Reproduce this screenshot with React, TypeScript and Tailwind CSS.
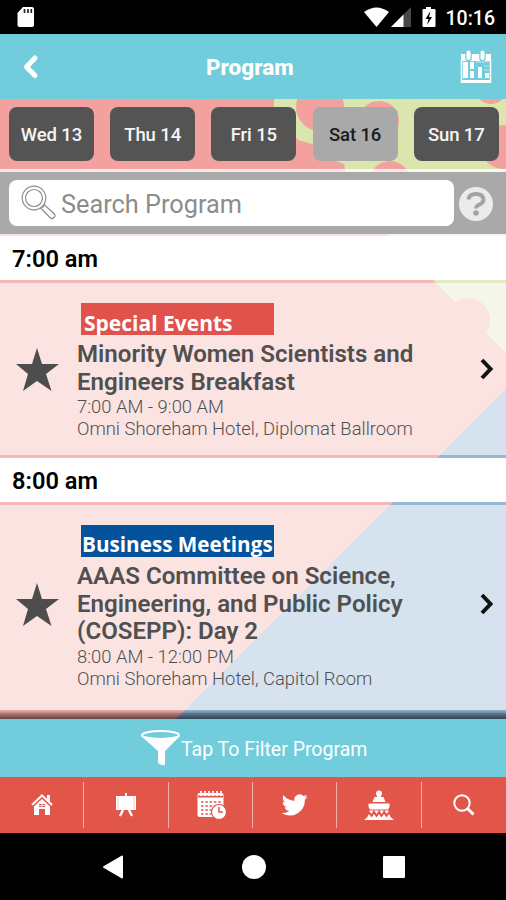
import React from 'react';

interface Session {
  time: string;
  category: string;
  categoryClass: string;
  title: string[];
  hours: string;
  place: string;
  rowClass: string;
}

const days = ['Wed 13', 'Thu 14', 'Fri 15', 'Sat 16', 'Sun 17'];

const sessions: Session[] = [
  {
    time: '7:00 am',
    category: 'Special Events',
    categoryClass: 'bg-[#e0524c] pl-[3px] text-[21px]',
    title: ['Minority Women Scientists and', 'Engineers Breakfast'],
    hours: '7:00 AM - 9:00 AM',
    place: 'Omni Shoreham Hotel, Diplomat Ballroom',
    rowClass: 'h-[172px]',
  },
  {
    time: '8:00 am',
    category: 'Business Meetings',
    categoryClass: 'bg-[#04529c] pl-px text-[20.700px] pb-px',
    title: ['AAAS Committee on Science,', 'Engineering, and Public Policy', '(COSEPP): Day 2'],
    hours: '8:00 AM - 12:00 PM',
    place: 'Omni Shoreham Hotel, Capitol Room',
    rowClass: 'h-[205px] [&>svg]:mb-[7px]',
  },
];

const StatusBar: React.FC = () => (
  <div className="flex h-[34px] items-center bg-black pl-[17px] pr-[11px] text-white">
    <svg width="18" height="22" viewBox="0 0 18 22">
      <path d="M6 1h9q2 0 2 2v16q0 2-2 2H2.500q-2 0-2-2V7z" fill="#fff" />
      <path d="M7.500 3v4M11 3v4M14.300 3v4" stroke="#222" strokeWidth="1.700" />
    </svg>
    <svg className="ml-auto" width="76" height="24" viewBox="0 0 76 24">
      <path d="M1 7Q13.500-2 26 7L13.500 22z" fill="#fff" />
      <path d="M48 2v20H28z" fill="#484848" />
      <path d="M40.500 9.500V22H28z" fill="#fff" />
      <path d="M63 2h5v2h3.500q1 0 1 1v16q0 1-1 1h-11q-1 0-1-1V5q0-1 1-1H63z" fill="#fff" />
      <path d="M67.500 6l-5 8h3l-1.500 6 5-8h-3z" fill="#000" />
    </svg>
    <span className="ml-[7px] mt-[3px] text-[19.500px] font-medium leading-none">10:16</span>
  </div>
);

const Header: React.FC = () => (
  <header className="flex h-[65px] items-center bg-[#71cddc] pl-[23px] pr-[14px] text-white">
    <svg width="32" height="26" viewBox="0 0 32 26">
      <path d="M12 4L3.500 13L12 21.500" fill="none" stroke="#fff" strokeWidth="5" strokeLinecap="round" strokeLinejoin="round" />
    </svg>
    <h1 className="ml-[151px] mt-[2px] text-[22.500px] font-extrabold leading-none">Program</h1>
    <svg className="ml-auto" width="32" height="34" viewBox="0 0 32 34">
      <path d="M1 4h30v7H1z" fill="#fff" />
      <path d="M1.500 10v22h29V10" fill="none" stroke="#fff" strokeWidth="1.500" />
      <path d="M1 30h30v3H1z" fill="#fff" />
      <path d="M8.500 8V3M22.500 8V3" stroke="#71cddc" strokeWidth="6.500" strokeLinecap="round" />
      <path d="M8.500 8V2.500M22.500 8V2.500" stroke="#fff" strokeWidth="4" strokeLinecap="round" />
      <path d="M3 12h5v16H3zM10 12h4v7h-4zM10 21h4v7h-4zM18 17h4v11h-4zM25 23h4v5h-4z" fill="#fff" />
      <path d="M16 12h13M24 16h5M24 20h5" stroke="#b8e6ed" strokeWidth="1" />
    </svg>
  </header>
);

const Backdrop: React.FC = () => (
  <svg className="col-start-1 row-start-1" width="506" height="620" viewBox="0 99 506 620">
    <path d="M0 99h506v620H0z" fill="#f3a19e" />
    <path d="M274 99H506V353L345 192V169Q325 160 312 153Q302 144 293 135L274 120z" fill="#dbe5ae" />
    <path d="M332 169h13l-1-5q-18-5-32-20l-18-5v30z" fill="#f3a19e" />
    <circle cx="320" cy="107" r="24" fill="#f3a19e" />
    <circle cx="379" cy="121" r="20" fill="#f3a19e" />
    <circle cx="390" cy="181" r="20" fill="#f3a19e" />
    <circle cx="491" cy="88" r="16" fill="#f3a19e" />
    <circle cx="503" cy="147" r="22" fill="#f3a19e" />
    <circle cx="468" cy="320" r="22" fill="#f3a19e" />
    <path d="M506 389V719H176z" fill="#76a1c6" />
  </svg>
);

const DayTabs: React.FC = () => (
  <div className="grid h-[70px] grid-cols-5 pt-[8px]">
    {days.map((day) => (
      <button
        key={day}
        className={`ml-[9px] h-[54px] w-[85px] rounded-[8px] pt-[3px] text-[18.500px] font-medium tracking-[-0.1px] ${
          day === 'Sat 16' ? 'bg-[#a9a9a9] text-[#1c1c1c]' : 'bg-[#545454] text-[#f4f4f4]'
        }`}
      >
        {day}
      </button>
    ))}
  </div>
);

const SearchBar: React.FC = () => (
  <div className="mt-[3px] flex h-[62px] items-center bg-[#a9a9a9] pl-[9px]">
    <div className="flex h-[46px] w-[445px] items-center rounded-[8px] bg-white pl-[12px]">
      <svg width="36" height="36" viewBox="0 0 36 36" fill="none" stroke="#8c8c8c" strokeWidth="1.200">
        <circle cx="13" cy="13" r="11.800" />
        <circle cx="13" cy="13" r="8.500" />
        <path d="M19.500 23l2.500-1 1-2.500 10 9q2 2 0 4t-4 0z" />
      </svg>
      <span className="ml-[4px] mt-[3px] text-[25.300px] leading-none text-[#8c8c8c]">Search Program</span>
    </div>
    <svg className="ml-[5px] mt-px" width="34" height="34" viewBox="0 0 34 34">
      <circle cx="17" cy="17" r="17" fill="#ebebeb" />
      <path d="M9.500 12.500Q10 7 17 7t7.500 5.500Q24.500 15.500 20.500 17.500 17 19 17 21.500" fill="none" stroke="#a3a3a3" strokeWidth="4" />
      <circle cx="17" cy="26" r="2.800" fill="#a3a3a3" />
    </svg>
  </div>
);

const SessionRow: React.FC<{ session: Session }> = ({ session }) => (
  <section className="bg-white/25">
    <h2 className="flex h-[44px] items-center bg-white pl-[12px] pt-[4px] text-[23.600px] font-semibold text-black">
      {session.time}
    </h2>
    <div className={`mt-[3px] mb-[3px] flex items-center bg-white/60 ${session.rowClass}`}>
      <svg className="ml-[15px] shrink-0" width="45" height="45" viewBox="0 0 45 45">
        <path d="M22 1l5 16h17L31 27l5.500 17L22 34 8 44l5-17L1 17h16z" fill="#4d4d4d" />
      </svg>
      <div className="ml-[17px] flex-1 self-start pt-[20px] text-[#505050]">
        <div className={`ml-[4px] flex h-[32px] w-[193px] items-end whitespace-nowrap font-['Open_Sans'] font-bold leading-[24px] text-white ${session.categoryClass}`}>
          {session.category}
        </div>
        <h3 className="mt-[6px] whitespace-nowrap text-[24.100px] font-semibold leading-[27.700px]">
          {session.title.map((line) => (
            <div key={line}>{line}</div>
          ))}
        </h3>
        <p className="whitespace-nowrap text-[18.400px] font-light leading-[21.500px]">{session.hours}</p>
        <p className="whitespace-nowrap text-[18.400px] font-light leading-[21.500px]">{session.place}</p>
      </div>
      <svg className="mr-[12px] shrink-0" width="14" height="22" viewBox="0 0 14 22">
        <path d="M2 2l8.500 9L2 20" fill="none" stroke="#111" strokeWidth="4" />
      </svg>
    </div>
  </section>
);

const FilterBar: React.FC = () => (
  <div className="flex h-[58px] items-center bg-[#71cddc] pl-[140px] text-white">
    <svg width="41" height="38" viewBox="0 0 41 38">
      <ellipse cx="20.500" cy="6" rx="18.500" ry="4" fill="none" stroke="#fff" strokeWidth="2" />
      <path d="M1 7q19.500 7 39 0L25 22v14q-3 1-7-2V22z" fill="#fff" />
    </svg>
    <span className="mt-[3px] text-[19.500px] leading-none">Tap To Filter Program</span>
  </div>
);

const HomeIcon = () => (
  <svg width="22" height="22" viewBox="0 0 22 22">
    <path d="M1 11L11 1.500 21 11" fill="none" stroke="#fff" strokeWidth="2" />
    <path d="M16 1h3v7l-3-3zM11 5l8 7.500V21h-5v-6H8v6H3v-8.500z" fill="#fff" />
    <path d="M8 10h6v3H8z" fill="#e25549" />
    <path d="M11 10v3M8 11.500h6" stroke="#fff" strokeWidth=".7" />
  </svg>
);

const BoardIcon = () => (
  <svg width="22" height="24" viewBox="0 0 22 24">
    <path d="M10 0h2v3h9v14H1V3h9z" fill="#fff" />
    <path d="M8 17l-3 6M14 17l3 6" stroke="#fff" strokeWidth="2.400" />
    <path d="M3 4v12M19 4v12" stroke="#f2a49e" strokeWidth=".6" />
  </svg>
);

const CalendarIcon = () => (
  <svg width="30" height="30" viewBox="0 0 30 30">
    <rect x="1.500" y="3" width="26" height="24" rx="2" fill="#fff" />
    <path d="M2 6.500h25" stroke="#e25549" strokeWidth="2" />
    <path d="M5 1v5M9 1v5M13 1v5M17 1v5M21 1v5M25 1v5" stroke="#fff" strokeWidth="1.800" />
    <path d="M5 12h20M5 16h18M5 20h10M5 24h10" stroke="#e25549" strokeWidth="1.600" strokeDasharray="2.500 1.800" />
    <circle cx="23" cy="22" r="7.500" fill="#fff" stroke="#e25549" strokeWidth="1.200" />
    <path d="M23 17v5h4" fill="none" stroke="#e25549" strokeWidth="1.500" />
  </svg>
);

const TwitterIcon = () => (
  <svg width="26" height="22" viewBox="0 0 24 20">
    <path d="M23.600 2.400a9.700 9.700 0 0 1-2.800.8A4.900 4.900 0 0 0 22.900.5a9.700 9.700 0 0 1-3.100 1.200 4.900 4.900 0 0 0-8.300 4.500A13.900 13.900 0 0 1 1.400 1.100a4.900 4.900 0 0 0 1.500 6.500 4.900 4.900 0 0 1-2.200-.6 4.900 4.900 0 0 0 3.900 4.900 4.900 4.900 0 0 1-2.200.1 4.900 4.900 0 0 0 4.600 3.400A9.800 9.800 0 0 1-.3 17.400a13.900 13.900 0 0 0 21.400-12.300 9.900 9.900 0 0 0 2.500-2.700z" fill="#fff" />
  </svg>
);

const CapitolIcon = () => (
  <svg width="30" height="30" viewBox="0 0 30 30">
    <circle cx="15" cy="3.500" r="3" fill="#fff" />
    <path d="M13 5h4v2h2.500l2 5h-13l2-5H13zM4.500 13.500h21V17l-1.500 2.500H6L4.500 17z" fill="#fff" />
    <path d="M5 20.500h4.500l-2.200 3.500zM10.200 20.500h4.500l-2.200 3.500zM15.400 20.500h4.500l-2.200 3.500zM20.500 20.500H25l-2.200 3.500z" fill="#fff" />
    <path d="M3 27.500l2-3.500 2.500 3.500 2.500-3.500 2.500 3.500 2.500-3.500 2.500 3.500 2.500-3.500 2.500 3.500 2.500-3.500 2 3.500 3 2.500H0z" fill="#fff" />
  </svg>
);

const SearchIcon = () => (
  <svg width="22" height="22" viewBox="0 0 22 22" fill="none" stroke="#fff">
    <circle cx="9" cy="9" r="7.700" strokeWidth="2" />
    <path d="M14.500 14.500l6 6" strokeWidth="3" />
  </svg>
);

const tabs = [HomeIcon, BoardIcon, CalendarIcon, TwitterIcon, CapitolIcon, SearchIcon];

const TabBar: React.FC = () => (
  <nav className="grid h-[56px] grid-cols-6 bg-[#e25549]">
    {tabs.map((Icon, i) => (
      <div key={i} className={`my-[5px] flex items-center justify-center pl-px ${i < 5 ? 'border-r border-[#f3b0aa]' : ''}`}>
        <Icon />
      </div>
    ))}
  </nav>
);

const SystemNav: React.FC = () => (
  <div className="flex h-[67px] items-center justify-between bg-black pl-[102px] pr-[101px]">
    <svg width="22" height="24" viewBox="0 0 22 24">
      <path d="M20 1.500v21L2 12z" fill="#fff" stroke="#fff" strokeWidth="2" strokeLinejoin="round" />
    </svg>
    <div className="size-[24px] rounded-full bg-white" />
    <div className="size-[22px] rounded-[1px] bg-white" />
  </div>
);

export default function App() {
  return (
    <div className="h-[900px] w-[506px] overflow-hidden bg-black font-[Roboto,sans-serif]">
      <StatusBar />
      <Header />
      <main className="grid h-[620px] overflow-hidden">
        <Backdrop />
        <div className="z-10 col-start-1 row-start-1 flex flex-col">
          <DayTabs />
          <div className="-mb-[3px] h-[3px] bg-white/75" />
          <SearchBar />
          <div className="h-[2px] bg-white/70" />
          {sessions.map((session) => (
            <SessionRow key={session.time} session={session} />
          ))}
          <div className="-mt-[3px] h-[10px] bg-linear-to-b from-black/5 to-black/65" />
        </div>
      </main>
      <FilterBar />
      <TabBar />
      <SystemNav />
    </div>
  );
}
